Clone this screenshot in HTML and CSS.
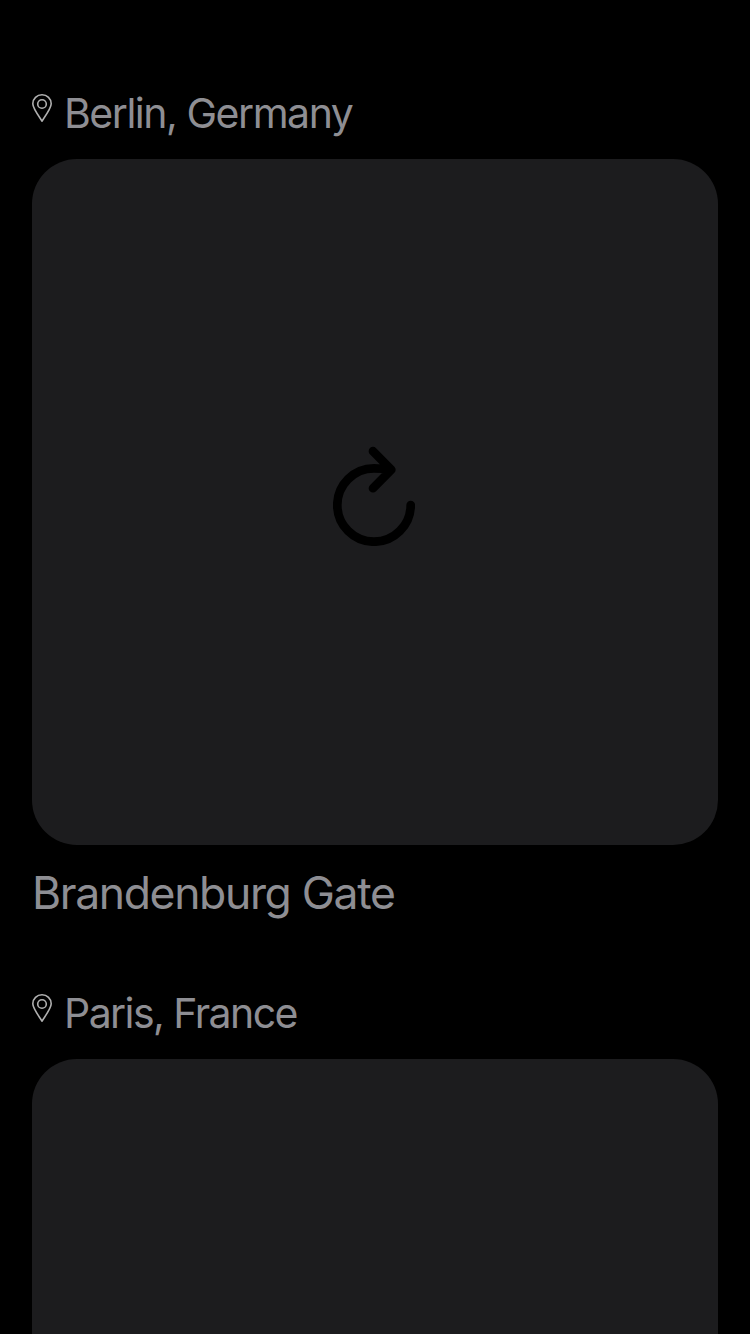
FILE: index.html
```html
<!DOCTYPE html>
<html lang="en">
<head>
<meta charset="utf-8">
<title>Landmarks</title>
<link rel="stylesheet" href="styles.css">
</head>
<body>
<main class="feed">
  <article class="post">
    <header class="location">
      <svg class="pin" viewBox="0 0 20 28"><path d="M10 27.1C8.7 24.8 .8 14.6 .8 9.8A9.2 9 0 0 1 19.2 9.8C19.2 14.6 11.3 24.8 10 27.1Z"/><circle cx="10" cy="10" r="4.3"/></svg>
      <span class="place berlin">Berlin, Germany</span>
    </header>
    <div class="photo">
      <svg class="reload" viewBox="0 0 82 100"><path d="M77.7 59A36.7 36.7 0 1 1 41 22.3Q49 22.3 57.8 23.8M40 5.2L58.3 23.8L40 42.2"/></svg>
    </div>
    <h2 class="title">Brandenburg Gate</h2>
  </article>
  <article class="post post-cut">
    <header class="location">
      <svg class="pin" viewBox="0 0 20 28"><path d="M10 27.1C8.7 24.8 .8 14.6 .8 9.8A9.2 9 0 0 1 19.2 9.8C19.2 14.6 11.3 24.8 10 27.1Z"/><circle cx="10" cy="10" r="4.3"/></svg>
      <span class="place paris">Paris, France</span>
    </header>
    <div class="photo"></div>
  </article>
</main>
</body>
</html>
```
FILE: styles.css
```css
* { box-sizing: border-box; }
body {
  margin: 0;
  background: #000;
  color: #8e8e93;
  font-family: Inter, "Liberation Sans", sans-serif;
}
.feed {
  display: flex;
  flex-direction: column;
  height: 1334px;
  padding: 88px 32px 0;
}
.post { flex: 0 0 900px; }
.post-cut {
  display: flex;
  flex: 1 1 0;
  flex-direction: column;
}
.location {
  display: flex;
  flex: none;
  gap: 12px;
  height: 71px;
}
.pin {
  width: 20px;
  height: 28px;
  margin-top: 6px;
  fill: none;
  stroke: #b0b0b0;
  stroke-width: 1.6;
}
.place {
  font-size: 41px;
  line-height: 50px;
  white-space: nowrap;
}
.berlin { letter-spacing: -1.47px; }
.paris { letter-spacing: -1.56px; }
.photo {
  display: flex;
  justify-content: center;
  height: 686px;
  padding-top: 287px;
  border-radius: 45px;
  background: #1c1c1e;
}
.post-cut .photo {
  flex: 1;
  height: auto;
  padding-top: 0;
  border-radius: 45px 45px 0 0;
}
.reload {
  width: 82px;
  height: 100px;
  margin-right: 2px;
  fill: none;
  stroke: #000;
  stroke-width: 8.7;
  stroke-linecap: round;
  stroke-linejoin: round;
}
.title {
  margin: 20px 0 0;
  font-size: 44.5px;
  font-weight: 400;
  line-height: 56px;
  letter-spacing: -1.36px;
  white-space: nowrap;
}
```
